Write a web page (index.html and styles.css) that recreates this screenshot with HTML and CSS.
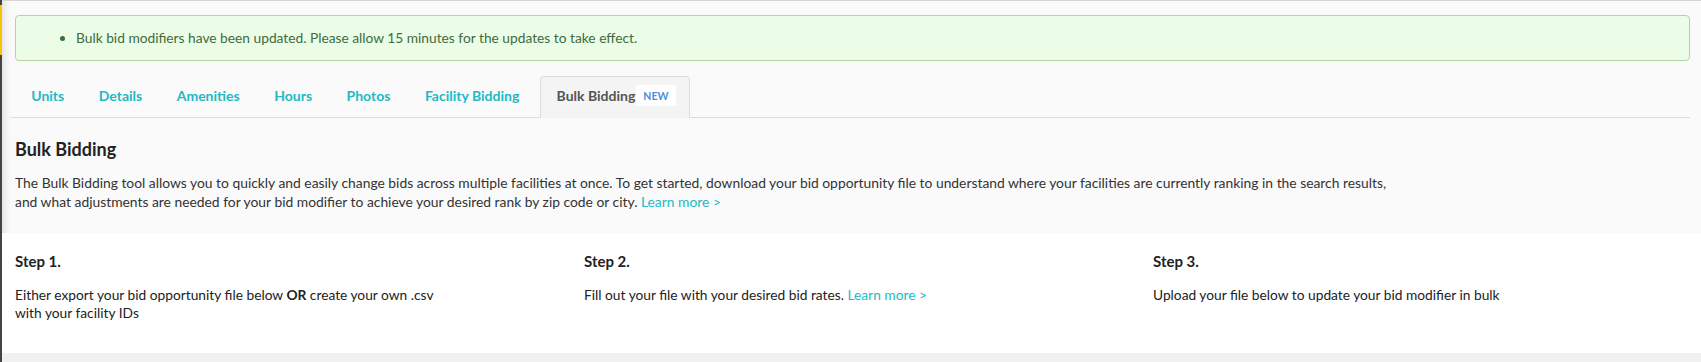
FILE: index.html
```html
<!DOCTYPE html>
<html>
<head>
  <meta charset="UTF-8">
  <meta name="viewport" content="width=device-width, initial-scale=1.0">
  <title>Bulk Bidding</title>
  <link rel="stylesheet" href="styles.css">
</head>
<body>
  <aside class="sidebar-edge">
    <span class="edge-accent"></span>
  </aside>

  <main class="content">
    <div class="alert alert-success">
      <ul>
        <li>Bulk bid modifiers have been updated. Please allow 15 minutes for the updates to take effect.</li>
      </ul>
    </div>

    <nav class="tabs">
      <a class="tab" href="#">Units</a>
      <a class="tab" href="#">Details</a>
      <a class="tab" href="#">Amenities</a>
      <a class="tab" href="#">Hours</a>
      <a class="tab" href="#">Photos</a>
      <a class="tab" href="#">Facility Bidding</a>
      <a class="tab tab-active" href="#">Bulk Bidding <span class="badge">NEW</span></a>
    </nav>

    <section class="intro">
      <h2>Bulk Bidding</h2>
      <p>
        The Bulk Bidding tool allows you to quickly and easily change bids across multiple facilities at once. To get started, download your bid opportunity file to understand where your facilities are currently ranking in the search results,<br>
        and what adjustments are needed for your bid modifier to achieve your desired rank by zip code or city. <a class="link" href="#">Learn more &gt;</a>
      </p>
    </section>

    <section class="steps">
      <div class="step">
        <h3>Step 1.</h3>
        <p>Either export your bid opportunity file below <strong>OR</strong> create your own .csv<br>with your facility IDs</p>
      </div>
      <div class="step">
        <h3>Step 2.</h3>
        <p>Fill out your file with your desired bid rates. <a class="link" href="#">Learn more &gt;</a></p>
      </div>
      <div class="step">
        <h3>Step 3.</h3>
        <p>Upload your file below to update your bid modifier in bulk</p>
      </div>
    </section>

    <div class="footer-strip"></div>
  </main>
</body>
</html>
```

FILE: styles.css
```css
* {
  box-sizing: border-box;
}

body {
  display: flex;

  width: 100vw;
  height: 100vh;

  margin: 0;
  overflow: hidden;

  background-color: #fafafa;

  font-family: 'Lato', 'Noto Sans', sans-serif;
  color: #222;
}

a {
  text-decoration: none;
}

.sidebar-edge {
  display: flex;
  flex-direction: column;

  width: 2px;
  flex-shrink: 0;

  background-color: #444;
}

.edge-accent {
  height: 50px;
  margin-top: 5px;
  background-color: #f7c200;
}

.content {
  display: flex;
  flex-direction: column;

  flex: 1;
  min-width: 0;

  border-top: 1px solid #d6d6d6;
  box-shadow: inset 10px 0 8px -8px rgba(0, 0, 0, 0.12);
  overflow: hidden;
}

.alert {
  margin: 14px 11px 0 13px;
  padding: 13px 20px;

  border: 1px solid #b6d4a2;
  border-radius: 4px;

  background-color: #ebfde6;
  color: #3e6b3f;

  font-size: 13.75px;
  line-height: 18px;
}

.alert ul {
  margin: 0;
  padding-left: 40px;
}

.tabs {
  display: flex;
  align-items: flex-end;

  margin: 15px 11px 0 9px;
  padding-left: 3px;

  border-bottom: 1px solid #dcdcdc;
}

.tab {
  padding: 9px 17.25px 11px;

  color: #22b9c4;
  font-size: 14px;
  font-weight: 700;
  line-height: 20px;
}

.tab-active {
  display: flex;
  align-items: center;
  gap: 1px;

  margin-left: 3px;
  margin-bottom: -1px;
  padding: 8px 13px 11px 16px;

  border: 1px solid #dcdcdc;
  border-bottom-color: #f4f4f4;
  border-radius: 4px 4px 0 0;

  background-color: #f4f4f4;
  color: #555;
}

.badge {
  padding: 2px 7px 1px;

  background-color: #fff;
  color: #4a8fd8;

  font-size: 10.5px;
  font-weight: 700;
  line-height: 18px;
}

.intro {
  padding: 20px 13px 22px;
}

.intro h2 {
  margin: 0 0 13px;

  color: #222;
  font-size: 18px;
  font-weight: 700;
  line-height: 22px;
}

.intro p {
  margin: 0;

  color: #333;
  font-size: 13.85px;
  line-height: 19px;
}

.link {
  color: #22b9c4;
}

.steps {
  display: grid;
  grid-template-columns: repeat(3, 569px);

  padding: 18px 0 31px;

  background-color: #fff;
}

.step {
  padding-left: 13px;
}

.step h3 {
  margin: 0 0 15px;

  color: #222;
  font-size: 15px;
  font-weight: 700;
  line-height: 20px;
}

.step p {
  margin: 0;

  color: #222;
  font-size: 13.75px;
  line-height: 18px;
}

.step strong {
  font-weight: 700;
}

.footer-strip {
  flex: 1;
  background-color: #f1f1f1;
}
```
